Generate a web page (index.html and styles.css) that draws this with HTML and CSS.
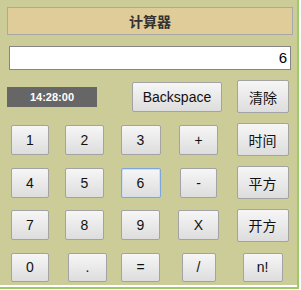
FILE: index.html
```html
<!DOCTYPE html>
<html>
<head>
<meta charset="utf-8">
<link rel="stylesheet" href="styles.css">
</head>
<body>
<div class="frame">
  <div class="panel">
    <div class="title">计算器</div>
    <div class="display">6</div>
    <div class="toprow">
      <div class="clock">14:28:00</div>
      <button class="key wide">Backspace</button>
      <button class="key cn">清除</button>
    </div>
    <div class="pad">
      <button class="key w38">1</button>
      <button class="key">2</button>
      <button class="key w40">3</button>
      <button class="key">+</button>
      <button class="key cn">时间</button>

      <button class="key w38">4</button>
      <button class="key">5</button>
      <button class="key w40 focus">6</button>
      <button class="key w37">-</button>
      <button class="key cn">平方</button>

      <button class="key w38">7</button>
      <button class="key">8</button>
      <button class="key">9</button>
      <button class="key w41">X</button>
      <button class="key cn">开方</button>

      <button class="key w38 short">0</button>
      <button class="key short dot">.</button>
      <button class="key short">=</button>
      <button class="key w34 short">/</button>
      <button class="key w40 short">n!</button>
    </div>
  </div>
</div>
</body>
</html>
```

FILE: styles.css
```css
html, body {
  margin: 0;
  padding: 0;
  background: #ffffff;
}

.frame {
  width: 297px;
  height: 287px;
  border-right: 2px solid #99cc66;
  border-bottom: 2px solid #99cc66;
  background: #ffffff;
}

.panel {
  background: #cccc99;
  height: 285px;
  padding-top: 7px;
  box-sizing: border-box;
  font-family: "Liberation Sans", Arial, "Noto Sans CJK SC", sans-serif;
}

.title {
  margin-left: 7px;
  width: 286px;
  height: 28px;
  box-sizing: border-box;
  background: #e0cc99;
  border: 1px solid #a8a8a8;
  color: #333333;
  font-family: "Noto Sans CJK SC", sans-serif;
  font-weight: bold;
  font-size: 14px;
  line-height: 26px;
  text-align: center;
}

.display {
  margin: 11px 0 0 9px;
  width: 282px;
  height: 24px;
  box-sizing: border-box;
  background: #ffffff;
  border: 1px solid #858585;
  font-size: 15px;
  line-height: 22px;
  text-align: right;
  padding-right: 3px;
  color: #000;
}

.toprow {
  display: flex;
  align-items: center;
  height: 33px;
  margin-top: 10px;
  padding-left: 7px;
}

.clock {
  width: 90px;
  height: 20px;
  background: #666666;
  color: #ffffff;
  font-weight: bold;
  font-size: 11px;
  line-height: 20px;
  text-align: center;
  margin-right: 35px;
}

.key {
  width: 39px;
  height: 30px;
  box-sizing: border-box;
  padding: 0;
  border: 1px solid #a3a3a3;
  border-radius: 2px;
  background: linear-gradient(#f6f6f6, #dddddd);
  color: #111111;
  font-family: "Liberation Sans", Arial, "Noto Sans CJK SC", sans-serif;
  font-size: 14px;
  line-height: 1;
}

.key.cn {
  width: 52px;
  height: 33px;
  font-family: "Noto Sans CJK SC", sans-serif;
}

.key.wide {
  width: 90px;
  margin-right: 15px;
}

.key.short { height: 29px; }
.w34 { width: 34px; }
.w37 { width: 37px; }
.w38 { width: 38px; }
.w40 { width: 40px; }
.w41 { width: 41px; }
.key.dot { margin-left: 6px; }

.key.focus {
  border-color: #7fa6dc;
  box-shadow: inset 0 0 0 1px #cfe0f5;
}

.pad {
  display: grid;
  grid-template-columns: 52px 57px 55px 61px 67px;
  grid-template-rows: 43px 43px 42px 42px;
  justify-items: center;
  align-items: center;
  margin-top: 5px;
  padding-left: 4px;
}
```
